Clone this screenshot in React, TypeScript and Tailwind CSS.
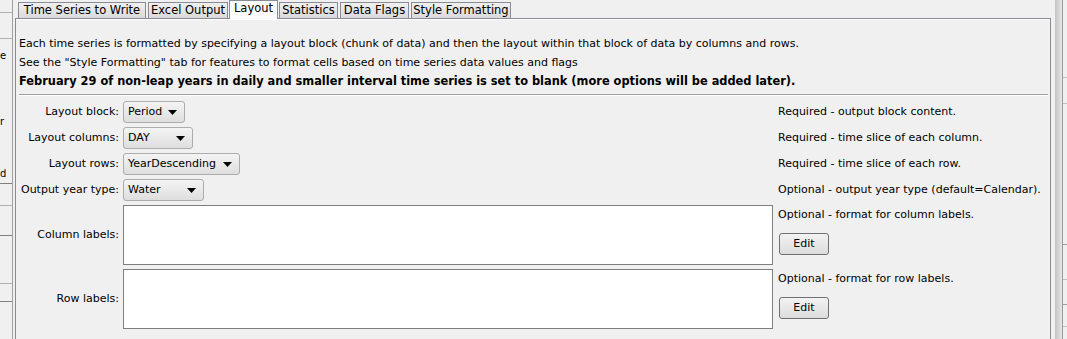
import React from "react";

const font = { fontFamily: '"DejaVu Sans", "Liberation Sans", sans-serif' };

const tabs = [
  { label: "Time Series to Write", w: "w-[128px]", ml: "ml-0" },
  { label: "Excel Output", w: "w-[80px]", ml: "ml-[2px]" },
  { label: "Layout", w: "w-[49px]", ml: "ml-[1px]", active: true },
  { label: "Statistics", w: "w-[59px]", ml: "ml-[1px]" },
  { label: "Data Flags", w: "w-[69px]", ml: "ml-[2px]" },
  { label: "Style Formatting", w: "w-[100px]", ml: "ml-[2px]" },
];

function Combo({ value, w }: { value: string; w: string }) {
  return (
    <div
      className={`${w} h-[22px] flex items-center justify-between pl-[4px] pr-[7px] border border-[#acacac] rounded-[3px] bg-gradient-to-b from-[#f4f4f4] to-[#dedede]`}
    >
      <span>{value}</span>
      <svg width="9" height="5" viewBox="0 0 9 5">
        <path d="M0 0H9L4.5 5Z" fill="#000" />
      </svg>
    </div>
  );
}

function EditButton() {
  return (
    <div className="w-[50px] h-[22px] flex items-center justify-center border border-[#707070] rounded-[3px] bg-gradient-to-b from-[#f3f3f3] to-[#dcdcdc]">
      Edit
    </div>
  );
}

function Label({ children }: { children: React.ReactNode }) {
  return <div className="flex items-center justify-end whitespace-nowrap">{children}</div>;
}

export default function App() {
  return (
    <div
      className="w-[1067px] h-[339px] bg-[#f0f0f0] text-black text-[11px] flex overflow-hidden"
      style={font}
    >
      {/* left edge: part of the neighbouring panel */}
      <div className="w-[13px] shrink-0 border-r border-[#a0a0a0] flex flex-col text-[10px] leading-none">
        <div className="h-[13px] border-b border-[#b0b0b0]" />
        <div className="h-[26px] border-b border-[#b0b0b0]" />
        <div className="h-[33px] flex items-center">e</div>
        <div className="h-[55px] flex items-end">r</div>
        <div className="h-[52px] flex items-end">d</div>
        <div className="h-[5px] border-b border-[#808080]" />
        <div className="h-[22px] border-b border-[#b0b0b0]" />
        <div className="h-[30px] border-b border-[#808080]" />
        <div className="h-[48px] border-b border-[#b0b0b0]" />
        <div className="h-[18px] border-b border-[#808080]" />
      </div>
      <div className="w-[2px] shrink-0" />

      {/* tabbed pane */}
      <div className="w-[1036px] shrink-0 flex flex-col">
        <div className="h-[18px] flex items-end pl-[3px] text-[11.5px]">
          {tabs.map((t) =>
            t.active ? (
              <div
                key={t.label}
                className={`${t.w} ${t.ml} h-[19px] -mb-[1px] relative z-10 flex items-center justify-center pb-[2px] border border-b-0 border-[#898c95] bg-[#fbfbfb] whitespace-nowrap`}
              >
                {t.label}
              </div>
            ) : (
              <div
                key={t.label}
                className={`${t.w} ${t.ml} h-[16px] flex items-center justify-center border border-b-0 border-[#898c95] bg-gradient-to-b from-[#f0f0f0] to-[#dadada] whitespace-nowrap`}
              >
                {t.label}
              </div>
            )
          )}
        </div>

        <div className="flex-1 border border-b-0 border-[#898c95]">
          <div className="h-full border-t border-[#ffffff] pl-[3px] pr-[2px] pt-[14px]">
            <div className="leading-[19px]">
              <div>
                Each time series is formatted by specifying a layout block (chunk of data) and then the layout within that block of data by columns and rows.
              </div>
              <div>See the "Style Formatting" tab for features to format cells based on time series data values and flags</div>
              <div className="font-bold text-[11.4px]">
                February 29 of non-leap years in daily and smaller interval time series is set to blank (more options will be added later).
              </div>
            </div>
            <div className="mt-[3px] h-[2px] border-t border-[#a0a0a0] border-b border-b-white" />

            <div className="mt-[5px] grid grid-cols-[100px_650px_1fr] grid-rows-[22px_22px_22px_22px_60px_60px] gap-x-[4px] gap-y-[4px]">
              <Label>Layout block:</Label>
              <div className="flex items-center">
                <Combo value="Period" w="w-[62px]" />
              </div>
              <div className="flex items-center pl-[1px]">Required - output block content.</div>

              <Label>Layout columns:</Label>
              <div className="flex items-center">
                <Combo value="DAY" w="w-[70px]" />
              </div>
              <div className="flex items-center pl-[1px]">Required - time slice of each column.</div>

              <Label>Layout rows:</Label>
              <div className="flex items-center">
                <Combo value="YearDescending" w="w-[117px]" />
              </div>
              <div className="flex items-center pl-[1px]">Required - time slice of each row.</div>

              <Label>Output year type:</Label>
              <div className="flex items-center">
                <Combo value="Water" w="w-[81px]" />
              </div>
              <div className="flex items-center pl-[1px] whitespace-nowrap">
                Optional - output year type (default=Calendar).
              </div>

              <Label>Column labels:</Label>
              <div className="bg-white border border-[#7f7f7f]" />
              <div className="pl-[1px] flex flex-col">
                <div className="leading-[19px]">Optional - format for column labels.</div>
                <div className="mt-[9px] pl-[1px]">
                  <EditButton />
                </div>
              </div>

              <Label>Row labels:</Label>
              <div className="bg-white border border-[#7f7f7f]" />
              <div className="pl-[1px] flex flex-col">
                <div className="leading-[19px]">Optional - format for row labels.</div>
                <div className="mt-[9px] pl-[1px]">
                  <EditButton />
                </div>
              </div>
            </div>
          </div>
        </div>
      </div>

      {/* right edge: neighbouring frame */}
      <div className="flex-1 flex">
        <div className="w-[4px]" />
        <div className="w-[7px] bg-gradient-to-r from-[#c4c4c4] to-[#e6e6e6]" />
        <div className="w-[1px] bg-[#9a9a9a]" />
        <div className="flex-1 flex flex-col">
          <div className="h-[78px] border-b border-[#c0c0c0]" />
          <div className="h-[26px] border-b border-[#c0c0c0]" />
          <div className="h-[141px] border-b border-[#a0a0a0]" />
          <div className="h-[35px] border-b border-[#c0c0c0]" />
          <div className="h-[25px] border-b border-[#a0a0a0]" />
          <div className="h-[22px] border-b border-[#c0c0c0]" />
        </div>
      </div>
    </div>
  );
}
